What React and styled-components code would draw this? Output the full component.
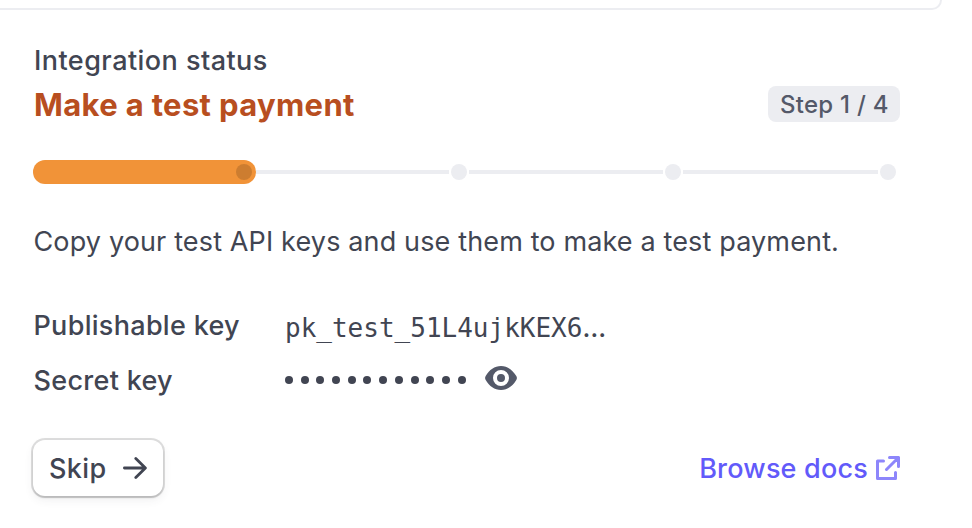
import React from "react";
import styled, { createGlobalStyle } from "styled-components";

const GlobalStyle = createGlobalStyle`
  * { box-sizing: border-box; }
  body {
    margin: 0;
    background: #fff;
    color: #414552;
    font-family: Inter, "Liberation Sans", sans-serif;
    overflow: hidden;
  }
`;

const Page = styled.main`
  width: 972px;
  height: 528px;
  overflow: hidden;
  background: #fff;
`;

const PreviousCard = styled.div`
  width: 942px;
  height: 10px;
  border: 2px solid #ecedf1;
  border-width: 0 2px 2px 0;
  border-radius: 0 0 16px 0;
`;

const Panel = styled.section`
  display: flex;
  flex-direction: column;
  width: 900px;
  padding: 35px 0 0 33px;
`;

const Eyebrow = styled.div`
  padding-left: 1px;
  font-size: 27px;
  font-weight: 450;
  line-height: 32px;
  letter-spacing: ${(p) => p.$track}px;
`;

const HeadingRow = styled.div`
  display: flex;
  justify-content: space-between;
  align-items: center;
  height: 36px;
  margin-top: 9px;
`;

const Heading = styled.h2`
  margin: 0;
  padding: 2px 0 0 1px;
  font-size: 31px;
  line-height: 36px;
  font-weight: 700;
  letter-spacing: ${(p) => p.$track}px;
  color: #b84e20;
`;

const Badge = styled.span`
  width: 132px;
  height: 36px;
  padding-left: 12px;
  border-radius: 8px;
  background: #ecedf1;
  color: #545969;
  font-size: 24px;
  font-weight: 500;
  line-height: 37px;
  letter-spacing: ${(p) => p.$track}px;
  white-space: nowrap;
`;

const Progress = styled.div`
  display: flex;
  align-items: center;
  gap: 2px;
  width: 863px;
  height: 24px;
  margin-top: 38px;
`;

const Completed = styled.div`
  display: flex;
  align-items: center;
  justify-content: flex-end;
  width: 223px;
  height: 24px;
  margin-right: -2px;
  padding-right: 4px;
  border-radius: 12px;
  background: #f19338;
`;

const Dot = styled.span`
  flex: none;
  width: 16px;
  height: 16px;
  border-radius: 50%;
  background: ${(p) => (p.$done ? "#cd7d30" : "#ecedf1")};
`;

const Line = styled.span`
  flex: ${(p) => p.$span} 1 0;
  height: 4px;
  background: #ecedf1;
`;

const Description = styled.p`
  margin: 42px 0 0;
  padding-left: 0.5px;
  font-size: 27px;
  line-height: 32px;
  letter-spacing: ${(p) => p.$track}px;
  white-space: nowrap;
`;

const Keys = styled.div`
  display: grid;
  grid-template-columns: 252px 1fr;
  grid-template-rows: 55px 55px;
  align-items: center;
  margin-top: 40px;
`;

const KeyLabel = styled.div`
  padding-left: 0.5px;
  font-size: 27px;
  line-height: 32px;
  font-weight: 500;
  letter-spacing: ${(p) => p.$track}px;
`;

const KeyValue = styled.div`
  display: flex;
  align-items: center;
  height: 32px;
`;

const Code = styled.code`
  padding-top: 4px;
  font-family: "DejaVu Sans Mono", monospace;
  font-size: 26px;
  line-height: 32px;
`;

const Ellipsis = styled.span`
  font-family: Inter, sans-serif;
  font-size: 26px;
  font-weight: 500;
`;

const SecretValue = styled(KeyValue)`
  padding-bottom: 5px;
`;

const Mask = styled.span`
  display: flex;
  gap: 7.7px;
  margin-right: 19px;
  padding-top: 3px;
`;

const MaskDot = styled.span`
  width: 8px;
  height: 8px;
  border-radius: 50%;
  background: #414552;
`;

const Actions = styled.div`
  display: flex;
  justify-content: space-between;
  align-items: center;
  height: 56px;
  margin-top: 32px;
`;

const SkipButton = styled.button`
  display: flex;
  align-items: center;
  justify-content: space-between;
  width: 130px;
  height: 56px;
  padding: 0 16px;
  border: 0;
  border-radius: 12px;
  background: #fff;
  color: #414552;
  font: 500 27px/32px Inter, sans-serif;
  letter-spacing: ${(p) => p.$track}px;
  box-shadow: 0 0 0 2px rgba(0, 0, 0, 0.13), 0 2px 2px rgba(0, 0, 0, 0.12),
    0 4px 10px rgba(64, 68, 82, 0.08);
`;

const DocsLink = styled.a`
  display: flex;
  align-items: center;
  gap: 8px;
  color: #625afa;
  font-size: 27px;
  font-weight: 500;
  line-height: 32px;
  letter-spacing: ${(p) => p.$track}px;
`;

const ActionText = styled.span`
  padding-top: 1px;
`;

const Icon = styled.svg`
  display: block;
  flex: none;
`;

const EyeIcon = () => (
  <Icon width="32" height="24" viewBox="0 0 32 24">
    <path
      fill="#545969"
      fillRule="evenodd"
      d="M16 0C22.500 0 27.500 3.800 31.300 10Q32.500 12 31.300 14C27.500 20.200 22.500 24 16 24S4.500 20.200.700 14Q-.500 12 .700 10C4.500 3.800 9.500 0 16 0ZM16 4a8 8 0 1 0 0 16a8 8 0 1 0 0-16ZM16 8a4 4 0 1 1 0 8a4 4 0 1 1 0-8Z"
    />
  </Icon>
);

const ArrowIcon = () => (
  <Icon width="24" height="24" viewBox="0 0 24 24" fill="none" stroke="#414552" strokeWidth="2.8" strokeLinecap="round" strokeLinejoin="round">
    <path d="M1.400 12H22M12.800 2.400L22.400 12L12.800 21.600" />
  </Icon>
);

const ExternalIcon = () => (
  <Icon width="24" height="24" viewBox="0 0 24 24" fill="none" stroke="#8d86fb" strokeWidth="3" strokeLinecap="round" strokeLinejoin="round">
    <path d="M7.500 5H1.500V22.500H19.500V16.500M13.500 1.500H22.500V10.500M22.500 1.500L10.500 13.500" />
  </Icon>
);

export default function App() {
  return (
    <Page>
      <GlobalStyle />
      <PreviousCard />
      <Panel>
        <Eyebrow $track={0.45}>Integration status</Eyebrow>
        <HeadingRow>
          <Heading $track={0.34}>Make a test payment</Heading>
          <Badge $track={0.25}>Step 1 / 4</Badge>
        </HeadingRow>
        <Progress>
          <Completed>
            <Dot $done />
          </Completed>
          <Line $span={193} />
          <Dot />
          <Line $span={194} />
          <Dot />
          <Line $span={195} />
          <Dot />
        </Progress>
        <Description $track={0.14}>
          Copy your test API keys and use them to make a test payment.
        </Description>
        <Keys>
          <KeyLabel $track={0.3}>Publishable key</KeyLabel>
          <KeyValue>
            <Code>
              pk_test_51L4ujkKEX6<Ellipsis>…</Ellipsis>
            </Code>
          </KeyValue>
          <KeyLabel $track={0.3}>Secret key</KeyLabel>
          <SecretValue>
            <Mask>
              {Array.from({ length: 12 }, (_, i) => (
                <MaskDot key={i} />
              ))}
            </Mask>
            <EyeIcon />
          </SecretValue>
        </Keys>
        <Actions>
          <SkipButton $track={0.4}>
            <ActionText>Skip</ActionText>
            <ArrowIcon />
          </SkipButton>
          <DocsLink $track={0.2}>
            <ActionText>Browse docs</ActionText>
            <ExternalIcon />
          </DocsLink>
        </Actions>
      </Panel>
    </Page>
  );
}
